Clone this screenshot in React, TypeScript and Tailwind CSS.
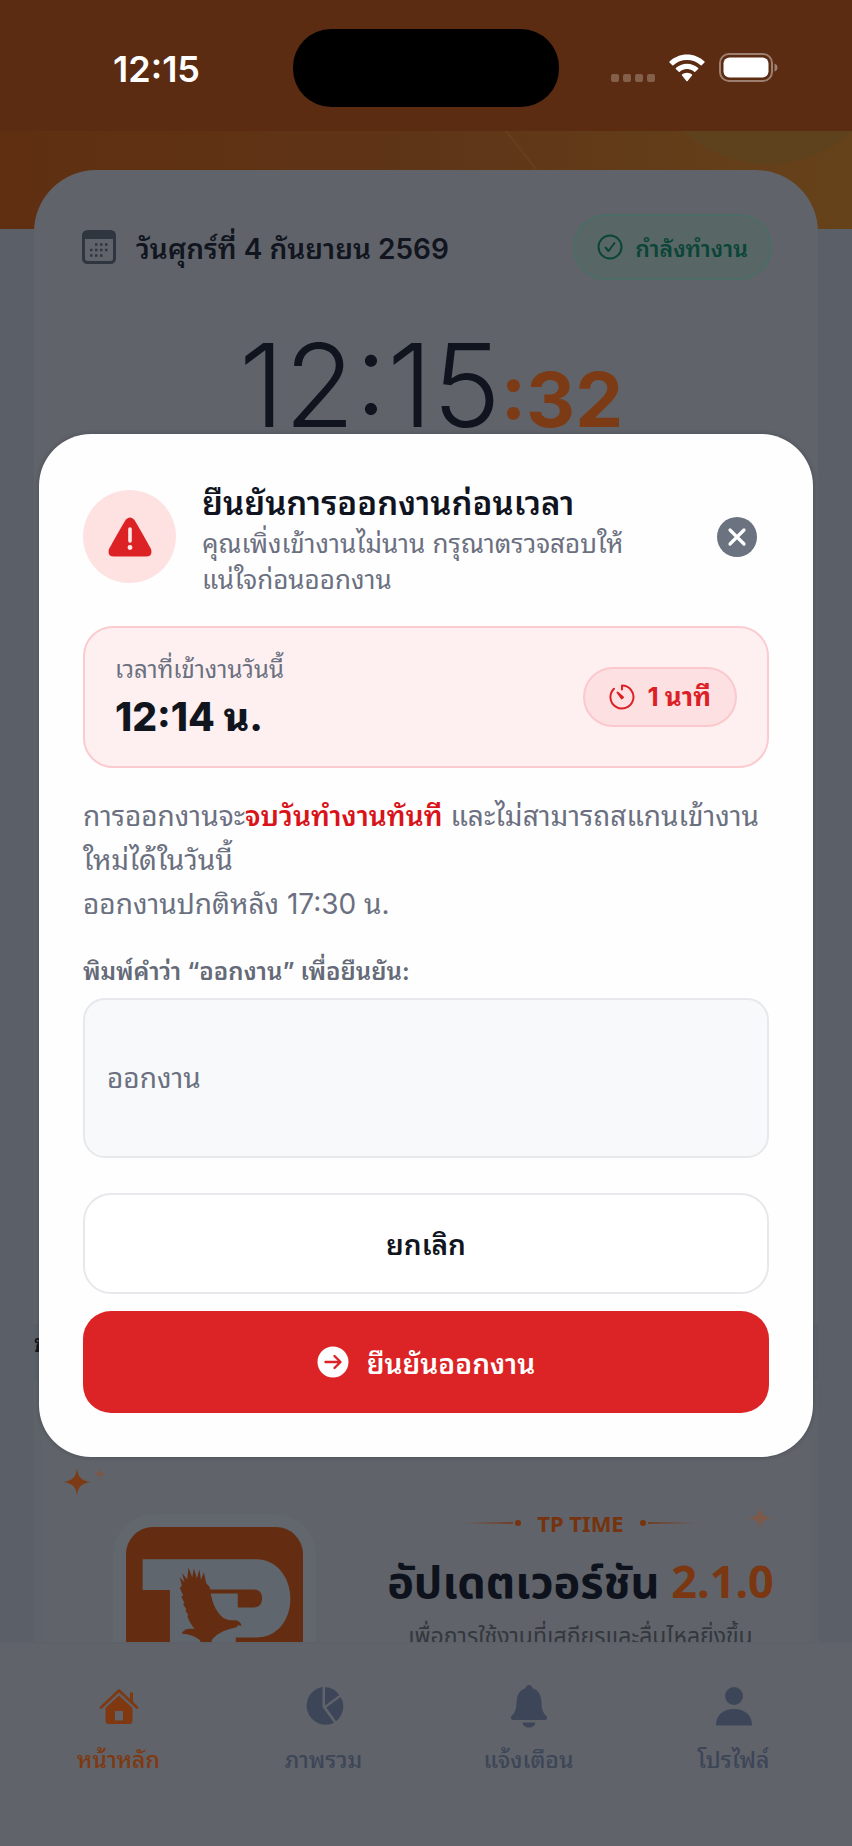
import React, { useState } from 'react';

interface NavItem {
  label: string;
  icon: React.ReactNode;
  active?: boolean;
}

const Sparkle: React.FC<{ className?: string }> = ({ className }) => (
  <svg viewBox="0 0 24 24" fill="currentColor" className={className} aria-hidden="true">
    <path d="M12 0C12.6 7.6 15.400 10.900 24 12C15.400 13.100 12.600 16.400 12 24C11.400 16.400 8.600 13.100 0 12C8.600 10.900 11.400 7.600 12 0Z" />
  </svg>
);

const navItems: NavItem[] = [
  {
    label: 'หน้าหลัก',
    active: true,
    icon: (
      <svg viewBox="0 0 40 40" className="h-10 w-10" aria-hidden="true">
        <path d="M2 21.500L20 4.500L38 21.500" fill="none" stroke="currentColor" strokeWidth="2.600" strokeLinecap="round" strokeLinejoin="round" />
        <path d="M31 6.500H34V17L31 14Z" fill="currentColor" />
        <path d="M20 9.500L33.500 22V34.500Q33.500 38 30 38H10Q6.500 38 6.500 34.500V22ZM16 25V34.500H24V25Z" fill="currentColor" fillRule="evenodd" />
      </svg>
    ),
  },
  {
    label: 'ภาพรวม',
    icon: (
      <svg viewBox="0 0 40 40" fill="currentColor" className="h-10 w-10" aria-hidden="true">
        <path d="M18.500 1V21L30 36.800A19 19 0 1 1 18.500 1Z" />
        <path d="M21 1A19 19 0 0 1 35.300 9L21 19.500Z" />
        <path d="M36.700 11A19 19 0 0 1 32 35.300L22.300 21.500Z" />
      </svg>
    ),
  },
  {
    label: 'แจ้งเตือน',
    icon: (
      <svg viewBox="0 0 40 44" fill="currentColor" className="h-11 w-10" aria-hidden="true">
        <path d="M20 1C22 1 23.200 2.400 23.400 4.200C29 5.800 32 10.500 32.300 17C32.700 25 33.500 28 37 31.500C39 33.700 38 36 35.500 36H4.500C2 36 1 33.700 3 31.500C6.500 28 7.300 25 7.700 17C8 10.500 11 5.800 16.600 4.200C16.800 2.400 18 1 20 1Z" />
        <path d="M13.500 38.500H26.500C26 42 23.500 43.500 20 43.500S14 42 13.500 38.500Z" />
      </svg>
    ),
  },
  {
    label: 'โปรไฟล์',
    icon: (
      <svg viewBox="0 0 40 40" fill="currentColor" className="h-10 w-10" aria-hidden="true">
        <circle cx="20" cy="10" r="9" />
        <path d="M2 39C2 29 9.500 23 20 23S38 29 38 39Q38 39.500 37 39.500H3Q2 39.500 2 39Z" />
      </svg>
    ),
  },
];

const StatusBar = () => (
  <div className="grid grid-cols-[1fr_266px_1fr] items-start bg-[#5b2b12] pt-[29px] pb-6 text-white">
    <span className="pt-5 pl-5 text-center text-4xl leading-10 font-semibold">12:15</span>
    <div className="h-[78px] rounded-[38px] bg-black" />
    <div className="flex items-center gap-[14px] pt-6 pl-[52px]">
      <div className="flex gap-1 pt-[19px]">
        <i className="h-2 w-2 rounded-xs bg-[#84604b]" />
        <i className="h-2 w-2 rounded-xs bg-[#84604b]" />
        <i className="h-2 w-2 rounded-xs bg-[#84604b]" />
        <i className="h-2 w-2 rounded-xs bg-[#84604b]" />
      </div>
      <svg viewBox="0 0 36 28" className="h-7 w-9 shrink-0" fill="currentColor" aria-hidden="true">
        <path d="M18 0.500C24.800 0.500 31 3.200 35.500 7.500Q36 8 35.500 8.500L32.700 11.300Q32.200 11.800 31.600 11.300C27.900 7.900 23.200 6 18 6S8.100 7.900 4.400 11.300Q3.800 11.800 3.300 11.300L0.500 8.500Q0 8 0.500 7.500C5 3.200 11.200 0.500 18 0.500Z" />
        <path d="M18 9.700C22.300 9.700 26.200 11.300 29.200 14Q29.700 14.500 29.200 15L26.300 17.800Q25.800 18.300 25.200 17.800C23.200 16.100 20.700 15.100 18 15.100S12.800 16.100 10.800 17.800Q10.200 18.300 9.700 17.800L6.800 15Q6.300 14.500 6.800 14C9.800 11.300 13.700 9.700 18 9.700Z" />
        <path d="M18 18.800C20 18.800 21.700 19.500 23 20.600Q23.500 21.100 23 21.600L18.600 27Q18 27.600 17.400 27L13 21.600Q12.500 21.100 13 20.600C14.300 19.500 16 18.800 18 18.800Z" />
      </svg>
      <svg viewBox="0 0 60 30" className="h-[30px] w-[60px] shrink-0" aria-hidden="true">
        <rect x="1" y="1" width="52" height="27" rx="9" fill="none" stroke="#9c7f6e" strokeWidth="2" />
        <rect x="4.500" y="4.500" width="45" height="20" rx="6" fill="#fff" />
        <path d="M55.500 10.500Q58.500 11.500 58.500 14.500T55.500 18.500Z" fill="#9c7f6e" />
      </svg>
    </div>
  </div>
);

const ClockCard = () => (
  <section className="flex flex-1 flex-col rounded-t-[62px] bg-[#606369] pt-11 pr-[46px] pl-12">
    <div className="flex items-center justify-between">
      <div className="flex items-center gap-5 text-[#11151f]">
        <svg viewBox="0 0 34 34" className="h-[34px] w-[34px] text-[#30363f]" aria-hidden="true">
          <rect x="1.500" y="1.500" width="31" height="31" rx="4" fill="none" stroke="currentColor" strokeWidth="3" />
          <path d="M1 4Q1 1 4 1H30Q33 1 33 4V9H1Z" fill="currentColor" />
          <path d="M13 14.500h2.500M18 14.500h2.500M23 14.500h2.500M8 20h2.500M13 20h2.500M18 20h2.500M23 20h2.500M8 25.500h2.500M13 25.500h2.500M18 25.500h2.500" stroke="currentColor" strokeWidth="2.500" />
        </svg>
        <span className="pt-1 text-[28px] leading-10 font-semibold">วันศุกร์ที่ 4 กันยายน 2569</span>
      </div>
      <div className="flex h-[66px] items-center gap-3 rounded-full border-2 border-[#4b6d66] bg-[#586766] px-[22px] text-[#0b4538]">
        <svg viewBox="0 0 26 26" className="h-[26px] w-[26px]" fill="none" stroke="currentColor" strokeWidth="2" strokeLinecap="round" strokeLinejoin="round" aria-hidden="true">
          <circle cx="13" cy="13" r="11.500" />
          <path d="M8.500 13.500L11.500 17L17.500 9" />
        </svg>
        <span className="pt-1 text-[23px] font-semibold">กำลังทำงาน</span>
      </div>
    </div>
    <div className="flex items-baseline justify-center pt-9 pl-2 leading-[140px]">
      <span className="text-[115px] font-light text-[#10141e]">12:15</span>
      <span className="text-[76px] font-bold text-[#7c3b14]">:32</span>
    </div>
  </section>
);

const PromoCard = () => (
  <section className="relative grid h-[262px] shrink-0 grid-cols-[177px_1fr] items-start gap-12 overflow-hidden border-x-8 border-[#5e6269] bg-[#606369] pl-[84px]">
    <Sparkle className="absolute top-[88px] left-[21px] h-7 w-7 text-[#7c3b14]" />
    <Sparkle className="absolute top-[88px] left-[52px] h-3 w-3 text-[#7b5846]" />
    <Sparkle className="absolute top-[126px] right-[38px] h-6 w-6 text-[#7d5a48]" />
    <div className="mt-[147px] rounded-[28px] shadow-[0_0_0_13px_#62676e]">
      <svg viewBox="78 81 532 532" className="w-full" aria-label="TP TIME" role="img">
        <rect x="78" y="81" width="532" height="532" rx="82" fill="#642c11" />
        <path d="M128 178H470C530 178 572 232 572 295C572 366 528 413 470 413H408V613H210V270H128Z" fill="#60666d" />
        <path d="M325 269H462Q487 269 487 296T462 323H414V281H325Z" fill="#642c11" />
        <path d="M240 264L246 257L239 232L254 247L246 220L262 238L266 203L277 232L282 206L291 235L299 209L303 240L312 217L319 250L330 262C334 300 345 335 372 355C385 362 398 361 408 361C418 363 424 369 425 378L414 376C412 384 404 384 398 385C375 390 350 402 336 420L330 470L310 450L300 421C285 410 270 403 247 402C246 396 250 393 255 394C250 390 258 387 284 387C276 378 268 366 262 348L266 346L256 332L260 330L249 312L254 310L244 290L250 288Z" fill="#642c11" />
      </svg>
    </div>
    <div className="mt-[127px] flex flex-col items-center font-['Noto_Sans','Noto_Sans_Thai',sans-serif]">
      <div className="flex items-center gap-4 text-[22px] leading-8 font-bold text-[#76330f]">
        <span className="flex items-center">
          <i className="h-0.5 w-12 bg-linear-to-r from-[#606369] to-[#703f25]" />
          <i className="ml-0.5 h-1.5 w-1.5 rounded-full bg-[#76330f]" />
        </span>
        TP TIME
        <span className="flex items-center">
          <i className="mr-0.5 h-1.5 w-1.5 rounded-full bg-[#76330f]" />
          <i className="h-0.5 w-12 bg-linear-to-l from-[#606369] to-[#703f25]" />
        </span>
      </div>
      <h3 className="pt-2 text-[45px] leading-[68px] font-bold whitespace-nowrap text-[#0d121c]">
        อัปเดตเวอร์ชัน <span className="text-[#7a3712]">2.1.0</span>
      </h3>
      <p className="text-[23px] leading-10 whitespace-nowrap text-[#33373e]">เพื่อการใช้งานที่เสถียรและลื่นไหลยิ่งขึ้น</p>
    </div>
  </section>
);

const BottomNav = () => (
  <nav className="grid h-[204px] shrink-0 grid-cols-4 items-start border-t-2 border-[#5e6268] bg-[#606369] px-4 pt-10">
    {navItems.map((item) => (
      <a
        key={item.label}
        href="#"
        className={
          item.active
            ? 'flex flex-col items-center gap-3 text-[#7f3810]'
            : 'flex flex-col items-center gap-3 text-[#3d4658]'
        }
      >
        <span className="flex h-11 items-center">{item.icon}</span>
        <span className="text-[23px] leading-10 font-medium">{item.label}</span>
      </a>
    ))}
  </nav>
);

interface ConfirmModalProps {
  onClose: () => void;
}

const ConfirmModal: React.FC<ConfirmModalProps> = ({ onClose }) => {
  const [value, setValue] = useState('');

  return (
    <div className="absolute inset-0 flex items-center px-[39px] pt-11">
      <div
        role="dialog"
        aria-labelledby="confirm-title"
        className="w-full rounded-[52px] bg-[#fefefe] px-11 pt-[42px] pb-11 shadow-[0_0_4px_rgba(20,25,50,0.3)]"
      >
        <div className="flex items-center gap-[26px]">
          <div className="flex h-[93px] w-[93px] shrink-0 items-center justify-center rounded-full bg-[#fee2e2]">
            <svg viewBox="0 0 44 40" className="h-10 w-11" aria-hidden="true">
              <path d="M18 2.500Q22 -1.500 26 2.500Q28 5 43 32Q45 39.500 38 39.500H6Q-1 39.500 1 32Q16 5 18 2.500Z" fill="#dd2225" />
              <path d="M22 12V24" stroke="#fee9e9" strokeWidth="3.600" strokeLinecap="round" />
              <circle cx="22" cy="30.500" r="2.400" fill="#fee9e9" />
            </svg>
          </div>
          <div className="flex-1 pt-1">
            <h2 id="confirm-title" className="text-[33px] leading-[46px] font-semibold text-[#10141e]">
              ยืนยันการออกงานก่อนเวลา
            </h2>
            <p className="text-[26px] leading-9 text-[#6b7080]">
              คุณเพิ่งเข้างานไม่นาน กรุณาตรวจสอบให้
              <br />
              แน่ใจก่อนออกงาน
            </p>
          </div>
          <button
            type="button"
            aria-label="ปิด"
            onClick={onClose}
            className="mr-3 flex h-10 w-10 shrink-0 items-center justify-center rounded-full bg-[#6b7280] text-white"
          >
            <svg viewBox="0 0 20 20" className="h-5 w-5" fill="none" stroke="currentColor" strokeWidth="3.200" strokeLinecap="round" aria-hidden="true">
              <path d="M3 3L17 17M17 3L3 17" />
            </svg>
          </button>
        </div>

        <div className="mt-7 flex items-center justify-between rounded-[30px] border-2 border-[#fbcbd0] bg-[#fef0f0] px-[30px] py-[22px]">
          <div>
            <p className="text-2xl leading-10 text-[#6b7080]">เวลาที่เข้างานวันนี้</p>
            <p className="text-[39px] leading-[54px] font-extrabold text-[#11151d]">12:14 น.</p>
          </div>
          <div className="flex h-[60px] items-center gap-3 rounded-full border-2 border-[#fbc9cd] bg-[#fde0e1] px-6 text-[#dc2027]">
            <svg viewBox="0 0 26 26" className="h-[26px] w-[26px]" fill="none" stroke="currentColor" strokeWidth="2" strokeLinecap="round" strokeLinejoin="round" aria-hidden="true">
              <path d="M13 5.500V1.500A11.500 11.500 0 1 1 5 4.700" />
              <path d="M8.500 8.500L14 13.200L12.800 14.400Z" fill="currentColor" />
            </svg>
            <span className="text-[26px] font-bold">1 นาที</span>
          </div>
        </div>

        <p className="mt-[26px] text-[28px] leading-[44px] text-[#6b7080]">
          การออกงานจะ<strong className="font-semibold text-[#d9131a]">จบวันทำงานทันที</strong> และไม่สามารถสแกนเข้างาน
          <br />
          ใหม่ได้ในวันนี้
          <br />
          ออกงานปกติหลัง 17:30 น.
        </p>

        <label htmlFor="confirm-word" className="mt-6 block text-2xl leading-[44px] font-semibold text-[#646a78]">
          พิมพ์คำว่า “ออกงาน” เพื่อยืนยัน:
        </label>
        <input
          id="confirm-word"
          type="text"
          placeholder="ออกงาน"
          value={value}
          onChange={(e) => setValue(e.target.value)}
          className="mt-1 block h-40 w-full rounded-[22px] border-2 border-[#e6e8eb] bg-[#f8f9fa] px-[22px] text-[28px] text-[#6b7080] outline-none placeholder:text-[#6b7080]"
        />

        <button
          type="button"
          onClick={onClose}
          className="mt-[35px] flex h-[101px] w-full items-center justify-center rounded-[28px] border-2 border-[#e6e8eb] bg-white pt-1 text-[28px] font-semibold text-[#11151d]"
        >
          ยกเลิก
        </button>
        <button
          type="button"
          className="mt-[17px] flex h-[102px] w-full items-center justify-center gap-[18px] rounded-[28px] bg-[#dc2325] text-[28px] font-semibold text-white"
        >
          <svg viewBox="0 0 32 32" className="h-8 w-8" aria-hidden="true">
            <circle cx="16" cy="16" r="15.500" fill="#fff" />
            <path d="M8.500 16H23M17.500 10L23.500 16L17.500 22" fill="none" stroke="#dc2325" strokeWidth="2.400" strokeLinecap="round" strokeLinejoin="round" />
          </svg>
          <span className="pt-1">ยืนยันออกงาน</span>
        </button>
      </div>
    </div>
  );
};

export default function App() {
  const [isOpen, setIsOpen] = useState(true);

  return (
    <div className="relative flex h-screen flex-col overflow-hidden bg-[#5b6068] font-['Inter','Noto_Sans_Thai_Looped',sans-serif]">
      <header className="shrink-0">
        <StatusBar />
        <div className="h-[98px] overflow-hidden bg-linear-to-r from-[#602f11] via-[#5f3517] to-[#66421a]">
          <svg viewBox="0 0 852 98" className="h-full w-full" preserveAspectRatio="none" aria-hidden="true">
            <circle cx="768" cy="-93" r="126" fill="#5e421e" />
            <path d="M506 0L536 38" stroke="#68401f" strokeWidth="2" />
          </svg>
        </div>
      </header>
      <main className="-mt-[59px] flex min-h-0 flex-1 flex-col px-[34px]">
        <ClockCard />
        <h2 className="pb-4 text-2xl leading-10 font-bold text-[#11151d]">ข่าวสาร</h2>
        <PromoCard />
      </main>
      <BottomNav />
      {isOpen && <ConfirmModal onClose={() => setIsOpen(false)} />}
    </div>
  );
}
